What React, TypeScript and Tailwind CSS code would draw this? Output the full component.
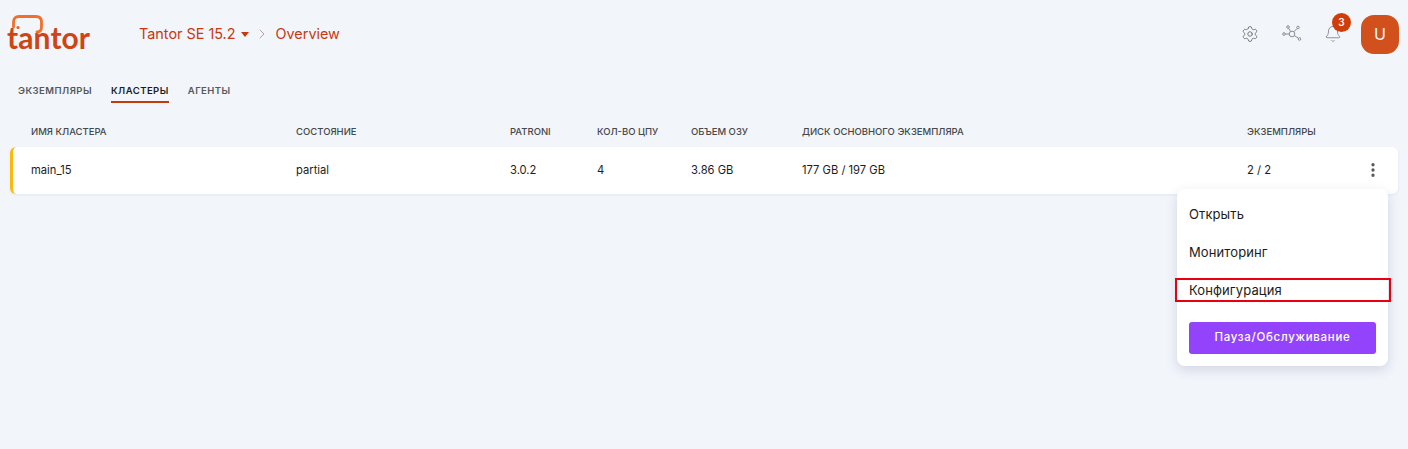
import { Bell, ChevronRight, EllipsisVertical, Settings } from 'lucide-react';

const tabs = ['ЭКЗЕМПЛЯРЫ', 'КЛАСТЕРЫ', 'АГЕНТЫ'];
const columnsClass = 'grid grid-cols-[265px_214px_87px_94px_111px_445px_1fr]';
const headers = ['ИМЯ КЛАСТЕРА', 'СОСТОЯНИЕ', 'PATRONI', 'КОЛ-ВО ЦПУ', 'ОБЪЕМ ОЗУ', 'ДИСК ОСНОВНОГО ЭКЗЕМПЛЯРА', 'ЭКЗЕМПЛЯРЫ'];
const values = ['main_15', 'partial', '3.0.2', '4', '3.86 GB', '177 GB / 197 GB', '2 / 2'];

const TantorLogo = () => (
  <div className="relative h-[36px] w-[84px]">
    <span className="absolute left-0 top-[4px] font-['Lato',sans-serif] text-[30px] font-bold leading-[34px] tracking-[0.1px] text-[#cf4413]">
      tantor
    </span>
    <svg className="absolute left-0 top-[-1px]" width="40" height="26" viewBox="0 0 40 26" fill="none">
      <path
        d="M6.5 12 V7 Q6.5 1.5 12 1.5 H29 Q34.5 1.5 34.5 7 V12 Q34.5 17 30 17"
        stroke="#f0702a"
        strokeWidth="2.8"
        strokeLinecap="round"
      />
      <circle cx="11" cy="12.5" r="1.6" fill="#e8601f" />
    </svg>
  </div>
);

const HubIcon = () => (
  <svg width="20" height="18" viewBox="0 0 20 18" fill="none" stroke="#8a8d92" strokeWidth="1">
    <circle cx="10" cy="9" r="2.8" />
    <circle cx="2" cy="9" r="1.3" />
    <circle cx="6" cy="2" r="1.3" />
    <circle cx="16" cy="2.5" r="1.3" />
    <circle cx="17.5" cy="14" r="1.3" />
    <path d="M3.3 9 H7.2 M6.6 3.2 L8.6 6.6 M15.1 3.5 L11.8 6.8 M16.4 13.2 L12.3 10.6" />
  </svg>
);

export default function App() {
  return (
    <div className="relative h-[449px] w-[1408px] overflow-hidden bg-[#f2f5fa] font-['Inter',sans-serif]">
      <header className="flex h-[68px] items-center pl-[7px] pr-[9px]">
        <TantorLogo />
        <nav className="ml-[48px] flex items-center text-[14.4px] text-[#c7390f]">
          <span>Tantor SE 15.2</span>
          <span className="ml-[5px] mt-[2px] h-0 w-0 border-x-[4px] border-t-[5px] border-x-transparent border-t-[#c7390f]" />
          <ChevronRight className="ml-[5px] text-[#c09a98]" size={16} strokeWidth={1.5} />
          <span className="ml-[6px]">Overview</span>
        </nav>
        <div className="ml-auto flex items-center">
          <Settings size={18} strokeWidth={1} className="text-[#55585c]" />
          <div className="ml-[23px]">
            <HubIcon />
          </div>
          <div className="relative ml-[22px]">
            <Bell size={18} strokeWidth={1} className="text-[#6f7277]" />
            <span className="absolute left-[8px] top-[-12px] flex h-[19px] w-[19px] items-center justify-center rounded-full bg-[#d03c0a] text-[10px] font-semibold text-white">
              3
            </span>
          </div>
          <div className="ml-[19px] flex h-[39px] w-[38px] items-center justify-center rounded-[13px] bg-[#d1501b] text-[16px] text-white">
            U
          </div>
        </div>
      </header>

      <div className="flex gap-[19px] pl-[18px] pt-[16px]">
        {tabs.map((tab, index) => (
          <div
            key={tab}
            className={`border-b-2 pb-[4px] text-[9.5px] font-semibold leading-[13px] tracking-[0.46px] ${
              index === 1 ? 'border-[#c7390f] text-[#1c1c1c]' : 'border-transparent text-[#55585c]'
            }`}
          >
            {tab}
          </div>
        ))}
      </div>

      <div className={`${columnsClass} ml-[31px] mt-[22px] text-[9.5px] font-medium leading-[14px] text-[#45484c]`}>
        {headers.map((header) => (
          <div key={header}>{header}</div>
        ))}
      </div>

      <div className="relative mx-[10px] mt-[8px] flex h-[47px] items-center rounded-[6px] border-l-[3px] border-[#fbb80f] bg-white pl-[18px] shadow-[0_1px_3px_rgba(60,80,120,0.08)]">
        <div className={`${columnsClass} w-full text-[11.2px] text-[#1c1c1c]`}>
          {values.map((value) => (
            <div key={value}>{value}</div>
          ))}
        </div>
        <EllipsisVertical className="absolute right-[16px] top-[14px] text-[#55585c]" size={18} strokeWidth={2.4} />
      </div>

      <div className="absolute left-[1177px] top-[189px] flex h-[177px] w-[211px] flex-col rounded-[8px] bg-white px-[12px] pt-[7px] shadow-[0_4px_12px_rgba(60,80,120,0.18)]">
        {['Открыть', 'Мониторинг', 'Конфигурация'].map((item) => (
          <div key={item} className="flex h-[38px] items-center text-[13px] tracking-[0.1px] text-[#1c1c1c]">
            {item}
          </div>
        ))}
        <button className="mt-[12px] h-[32px] w-[187px] rounded-[3px] bg-[#9343fb] text-[11.5px] font-medium tracking-[0.7px] text-white">
          Пауза/Обслуживание
        </button>
      </div>

      <div className="absolute left-[1175px] top-[278px] h-[24px] w-[216px] border-2 border-[#e8000f]" />
    </div>
  );
}
